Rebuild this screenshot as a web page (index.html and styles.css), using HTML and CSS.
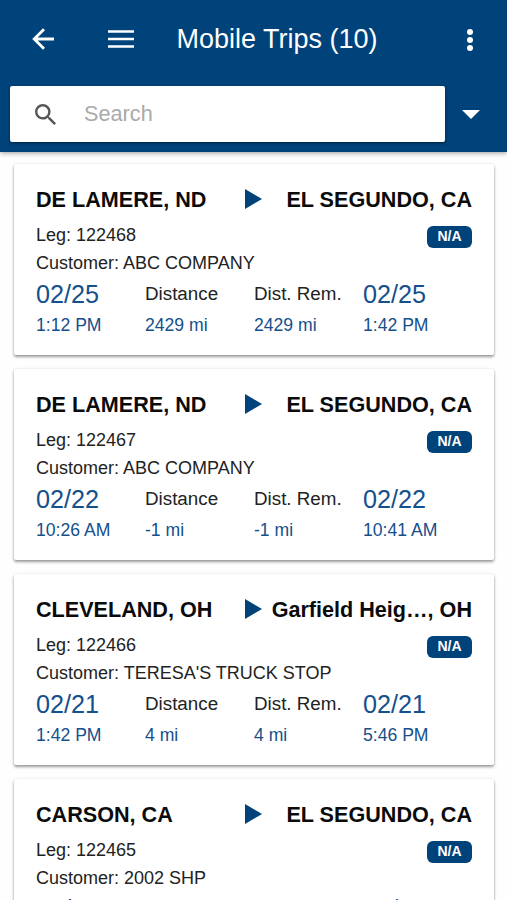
FILE: index.html
```html
<!DOCTYPE html>
<html lang="en">
<head>
<meta charset="utf-8">
<title>Mobile Trips</title>
<link rel="stylesheet" href="styles.css">
</head>
<body>
<header class="header">
  <div class="toolbar">
    <svg class="icon-back" viewBox="0 0 24 24"><path d="M23 12H4M13 2.2L3.2 12l9.800 9.800"/></svg>
    <svg class="icon-menu" viewBox="0 0 26 18"><path d="M0 1.500h26M0 9h26M0 16.500h26"/></svg>
    <h1 class="title">Mobile Trips (10)</h1>
    <svg class="icon-more" viewBox="0 0 6 22"><circle cx="3" cy="3" r="3"/><circle cx="3" cy="11" r="3"/><circle cx="3" cy="19" r="3"/></svg>
  </div>
  <div class="search-row">
    <div class="search">
      <svg class="icon-search" viewBox="3 3 17.5 17.5"><path d="M15.500 14h-.79l-.28-.27A6.471 6.471 0 0 0 16 9.500 6.500 6.500 0 1 0 9.500 16c1.610 0 3.090-.59 4.230-1.570l.27.28v.79l5 4.990L20.490 19l-4.990-5zm-6 0C7.010 14 5 11.990 5 9.500S7.010 5 9.500 5 14 7.010 14 9.500 11.990 14 9.500 14z"/></svg>
      <span class="placeholder">Search</span>
    </div>
    <svg class="icon-caret" viewBox="0 0 18 9"><path d="M0 0h18L9 9z"/></svg>
  </div>
</header>
<main class="trips">
  <article class="card">
    <div class="route"><span>DE LAMERE, ND</span><svg class="arrow" viewBox="0 0 17 20"><path d="M0 0l17 10L0 20z"/></svg><span class="dest">EL SEGUNDO, CA</span></div>
    <div class="leg"><span>Leg: 122468</span><span class="badge">N/A</span></div>
    <div class="customer">Customer: ABC COMPANY</div>
    <div class="stats">
      <span class="date">02/25</span><span class="label">Distance</span><span class="label">Dist. Rem.</span><span class="date">02/25</span>
      <span class="value">1:12 PM</span><span class="value">2429 mi</span><span class="value">2429 mi</span><span class="value">1:42 PM</span>
    </div>
  </article>
  <article class="card">
    <div class="route"><span>DE LAMERE, ND</span><svg class="arrow" viewBox="0 0 17 20"><path d="M0 0l17 10L0 20z"/></svg><span class="dest">EL SEGUNDO, CA</span></div>
    <div class="leg"><span>Leg: 122467</span><span class="badge">N/A</span></div>
    <div class="customer">Customer: ABC COMPANY</div>
    <div class="stats">
      <span class="date">02/22</span><span class="label">Distance</span><span class="label">Dist. Rem.</span><span class="date">02/22</span>
      <span class="value">10:26 AM</span><span class="value">-1 mi</span><span class="value">-1 mi</span><span class="value">10:41 AM</span>
    </div>
  </article>
  <article class="card">
    <div class="route"><span>CLEVELAND, OH</span><svg class="arrow" viewBox="0 0 17 20"><path d="M0 0l17 10L0 20z"/></svg><span class="dest">Garfield Heig…, OH</span></div>
    <div class="leg"><span>Leg: 122466</span><span class="badge">N/A</span></div>
    <div class="customer">Customer: TERESA'S TRUCK STOP</div>
    <div class="stats">
      <span class="date">02/21</span><span class="label">Distance</span><span class="label">Dist. Rem.</span><span class="date">02/21</span>
      <span class="value">1:42 PM</span><span class="value">4 mi</span><span class="value">4 mi</span><span class="value">5:46 PM</span>
    </div>
  </article>
  <article class="card">
    <div class="route"><span>CARSON, CA</span><svg class="arrow" viewBox="0 0 17 20"><path d="M0 0l17 10L0 20z"/></svg><span class="dest">EL SEGUNDO, CA</span></div>
    <div class="leg"><span>Leg: 122465</span><span class="badge">N/A</span></div>
    <div class="customer">Customer: 2002 SHP</div>
    <div class="stats">
      <span class="date">02/21</span><span></span><span></span><span class="date">02/21</span>
    </div>
  </article>
</main>
</body>
</html>
```
FILE: styles.css
```css
* { box-sizing: border-box; }
html, body { height: 100%; }
body {
  margin: 0;
  display: flex;
  flex-direction: column;
  overflow: hidden;
  background: #fefefe;
  color: #222;
  font-family: "Liberation Sans", Arial, sans-serif;
}
svg { display: block; flex: none; }
.header {
  flex: none;
  height: 152px;
  background: #00427a;
  box-shadow: 0 1px 5px rgba(0, 0, 0, .4);
}
.toolbar {
  display: flex;
  align-items: center;
  height: 86px;
  padding: 0 34px 8px 32px;
}
.icon-back { width: 24px; height: 24px; margin-left: -1px; fill: none; stroke: #fff; stroke-width: 2.8; }
.icon-menu { width: 26px; height: 18px; margin-left: 53px; fill: none; stroke: #fff; stroke-width: 2.6; }
.title { flex: 1; margin: 0 0 0 42.5px; font-size: 27px; line-height: 32px; font-weight: 400; color: #fff; white-space: nowrap; }
.icon-more { width: 6px; height: 22px; margin-top: 1px; fill: #fff; }
.search-row { display: flex; align-items: center; padding-left: 10px; }
.search {
  display: flex;
  align-items: center;
  width: 435px;
  height: 56px;
  padding-left: 25px;
  border-radius: 2px;
  background: #fff;
  box-shadow: 0 1px 3px rgba(0, 0, 0, .5);
}
.icon-search { width: 21px; height: 21px; fill: #555; }
.placeholder { margin-left: 28px; font-size: 21.7px; line-height: 26px; color: #aaa; }
.icon-caret { width: 18px; height: 9px; margin-left: 17px; fill: #fff; }
.trips { display: flex; flex-direction: column; gap: 14px; padding: 12px 13px 0 14px; }
.card {
  flex: none;
  height: 191px;
  padding: 22px 22px 0;
  border-radius: 2px;
  background: #fff;
  box-shadow: 0 2px 3px rgba(0, 0, 0, .38), 0 0 3px rgba(0, 0, 0, .1);
}
.route {
  display: grid;
  grid-template-columns: 209px 17px 1fr;
  align-items: center;
  height: 27px;
  font-size: 21.6px;
  font-weight: 700;
  line-height: 27px;
  color: #0b0b0b;
  white-space: nowrap;
}
.arrow { width: 17px; height: 20px; margin-bottom: 2px; fill: #00427a; }
.dest { text-align: right; }
.leg { display: flex; justify-content: space-between; height: 35px; font-size: 18px; line-height: 44px; }
.badge {
  width: 45px;
  height: 22px;
  margin-top: 13px;
  border-radius: 6px;
  background: #00427a;
  color: #fff;
  font-size: 14px;
  font-weight: 700;
  line-height: 21px;
  text-align: center;
}
.customer { height: 30px; font-size: 18px; line-height: 30px; white-space: nowrap; }
.stats { display: grid; grid-template-columns: repeat(4, 109px); grid-template-rows: 32px 30px; white-space: nowrap; }
.date { font-size: 25.2px; line-height: 33px; color: #14508b; }
.label { font-size: 18.8px; line-height: 32px; }
.value { font-size: 17.6px; line-height: 30px; color: #14508b; }
```
